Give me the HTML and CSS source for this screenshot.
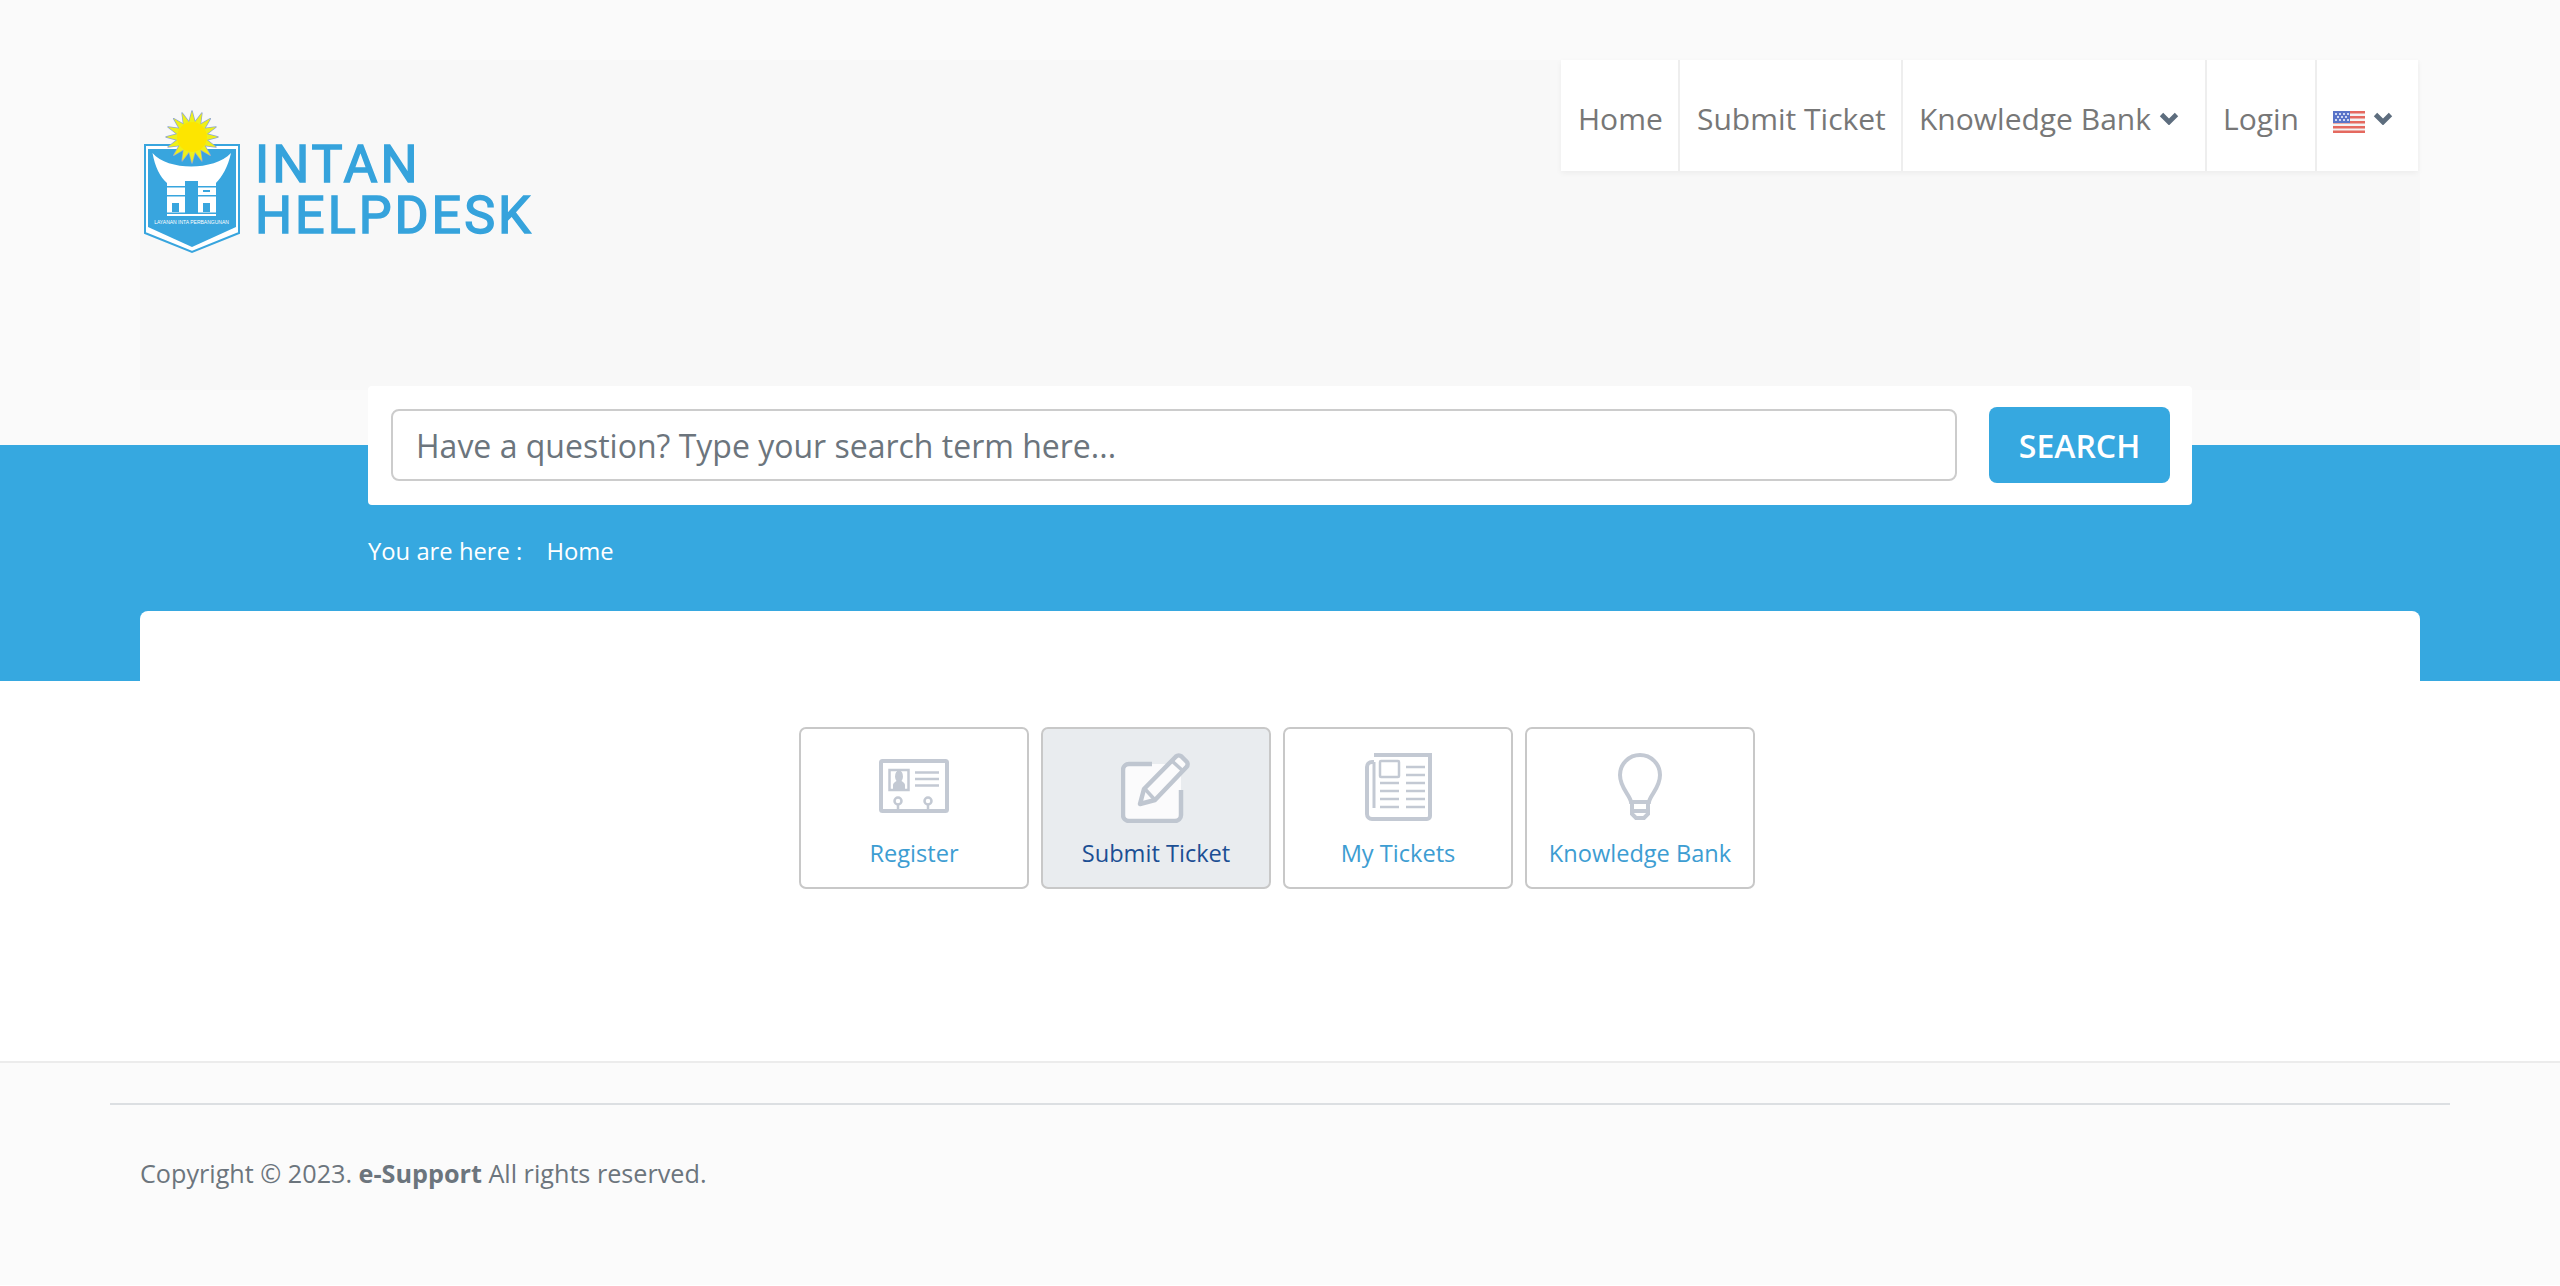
FILE: index.html
```html
<!DOCTYPE html>
<html lang="en">
<head>
<meta charset="utf-8">
<title>Intan Helpdesk</title>
<link rel="stylesheet" href="styles.css">
</head>
<body>
<header class="top">
  <div class="top-inner">
    <a class="logo" href="#">
      <svg class="logo-mark" width="96" height="150" viewBox="0 0 96 150">
        <defs>
          <polygon id="rays" points="0,-26 5.500,-5.500 26,0 5.500,5.500 0,26 -5.500,5.500 -26,0 -5.500,-5.500"/>
        </defs>
        <path d="M1 40H95V128L48 147L1 128Z" fill="#fff" stroke="#38a5de" stroke-width="2"/>
        <path d="M4 44H92V122L48 142L4 122Z" fill="#38a5de"/>
        <path d="M8.500 48C24 66 70 66 87 48C84 62 78 72 72 78V111H23V78C16 72 11 62 8.500 48Z" fill="#fff"/>
        <g fill="#38a5de">
          <rect x="41" y="76" width="13" height="32"/>
          <rect x="23" y="81" width="18" height="1.500"/><rect x="23" y="90" width="18" height="1.500"/>
          <rect x="54" y="81" width="18" height="1.500"/><rect x="54" y="90" width="18" height="1.500"/>
          <rect x="59" y="85" width="7" height="2"/>
          <rect x="28" y="98" width="7" height="9"/><rect x="59" y="98" width="7" height="9"/>
          <rect x="23" y="107.500" width="49" height="1.500"/>
        </g>
        <text class="logo-motto" x="47.500" y="119" text-anchor="middle">LAYANAN INTA PERBANGUNAN</text>
        <g transform="translate(48,32)">
          <g fill="#8fa6d6" stroke="#8fa6d6" stroke-width="1.400" stroke-linejoin="round">
            <use href="#rays"/><use href="#rays" transform="rotate(22.5)"/><use href="#rays" transform="rotate(45)"/><use href="#rays" transform="rotate(67.5)"/>
          </g>
          <g fill="#eef01a">
            <use href="#rays"/><use href="#rays" transform="rotate(22.5)"/><use href="#rays" transform="rotate(45)"/><use href="#rays" transform="rotate(67.5)"/>
          </g>
          <circle r="15" fill="#fde500"/>
        </g>
      </svg>
      <span class="logo-text"><span>INTAN</span><span>HELPDESK</span></span>
    </a>
    <nav class="nav">
      <a class="nav-item nav-home" href="#">Home</a>
      <a class="nav-item nav-submit" href="#">Submit Ticket</a>
      <a class="nav-item nav-kb" href="#">Knowledge Bank
        <svg class="chev" width="20" height="13" viewBox="0 0 20 13"><path d="M2.500 2.500L10 10L17.500 2.500" fill="none" stroke="#5d6d7e" stroke-width="4.800"/></svg>
      </a>
      <a class="nav-item nav-login" href="#">Login</a>
      <a class="nav-item nav-lang" href="#">
        <svg class="flag" width="32" height="22" viewBox="0 0 32 22">
          <rect width="32" height="22" fill="#f3f3f3"/>
          <g fill="#e5695f"><rect width="32" height="2.500"/><rect y="5" width="32" height="2.500"/><rect y="10" width="32" height="2.500"/><rect y="15" width="32" height="2.500"/><rect y="19.500" width="32" height="2.500"/></g>
          <rect width="17" height="12" fill="#5a74c8"/>
          <g fill="#cfd8f2"><rect x="2" y="2" width="2" height="2"/><rect x="6" y="2" width="2" height="2"/><rect x="10" y="2" width="2" height="2"/><rect x="14" y="2" width="2" height="2"/><rect x="4" y="5" width="2" height="2"/><rect x="8" y="5" width="2" height="2"/><rect x="12" y="5" width="2" height="2"/><rect x="2" y="8" width="2" height="2"/><rect x="6" y="8" width="2" height="2"/><rect x="10" y="8" width="2" height="2"/><rect x="14" y="8" width="2" height="2"/></g>
        </svg>
        <svg class="chev" width="20" height="13" viewBox="0 0 20 13"><path d="M2.500 2.500L10 10L17.500 2.500" fill="none" stroke="#5d6d7e" stroke-width="4.800"/></svg>
      </a>
    </nav>
  </div>
</header>

<section class="hero">
  <form class="search">
    <input class="search-input" type="text" placeholder="Have a question? Type your search term here...">
    <button class="search-btn" type="button">SEARCH</button>
  </form>
  <div class="crumbs"><span>You are here :</span><a href="#">Home</a></div>
  <div class="card-top"></div>
</section>

<main class="main">
  <div class="tiles">
    <a class="tile" href="#">
      <svg class="tile-icon" width="70" height="70" viewBox="0 0 70 70" fill="none" stroke="#c3c9d3">
        <rect x="2" y="8" width="66" height="50" rx="1.500" stroke-width="4"/>
        <rect x="10.500" y="17" width="19" height="20" stroke-width="2.500"/>
        <path d="M14 36v-4c0-2 2-3 3.500-4a4 6 0 1 1 5 0c1.500 1 3.500 2 3.500 4v4z" fill="#c3c9d3" stroke="none"/>
        <path d="M36 19.500h24M36 26h24M36 32.500h24" stroke-width="2.500"/>
        <circle cx="19" cy="48" r="3.500" stroke-width="2.500"/><circle cx="49" cy="48" r="3.500" stroke-width="2.500"/>
        <path d="M19 51.500v6M49 51.500v6" stroke-width="2.500"/>
      </svg>
      <span>Register</span>
    </a>
    <a class="tile is-active" href="#">
      <svg class="tile-icon" width="70" height="70" viewBox="0 0 70 70" fill="none" stroke="#bfc6d0">
        <rect x="2" y="11" width="58" height="57" rx="6" fill="#fbfbfc" stroke="none"/>
        <path d="M31 11H8a6 6 0 0 0-6 6v45a6 6 0 0 0 6 6h46a6 6 0 0 0 6-6V37" stroke-width="4.500"/>
        <path d="M19 51l4-15L55 3.500a4 4 0 0 1 5.500 0l5 5a4 4 0 0 1 0 5.500L34 47z" fill="#fbfbfc" stroke-width="4.500" stroke-linejoin="round"/>
        <path d="M24 36l10 11M51 8l11 10" stroke-width="3.500"/>
      </svg>
      <span>Submit Ticket</span>
    </a>
    <a class="tile" href="#">
      <svg class="tile-icon" width="70" height="70" viewBox="0 0 70 70" fill="none" stroke="#c3c9d3">
        <path d="M11 2h56v61a3 3 0 0 1-3 3H9a5 5 0 0 1-5-5V14a5 5 0 0 1 5-5h2" stroke-width="4"/>
        <path d="M11 9v46" stroke-width="3"/>
        <rect x="17" y="8" width="19" height="16" rx="1" stroke-width="2.500"/>
        <path d="M43 14h19M43 22h19M17 30h19M43 30h19M17 38h19M43 38h19M17 46h19M43 46h19M17 54h19M43 54h19" stroke-width="2.500"/>
      </svg>
      <span>My Tickets</span>
    </a>
    <a class="tile" href="#">
      <svg class="tile-icon" width="44" height="70" viewBox="0 0 44 70" fill="none" stroke="#c3c9d3">
        <path d="M13 49c-1-7-11-14-11-27a20 20 0 0 1 40 0c0 13-10 20-11 27z" stroke-width="4"/>
        <path d="M14 50v11l4 4h8l4-4V50M14 58h16" stroke-width="4"/>
      </svg>
      <span>Knowledge Bank</span>
    </a>
  </div>
</main>

<footer class="footer">
  <hr class="footer-rule">
  <p class="copyright">Copyright © 2023. <strong>e-Support</strong> All rights reserved.</p>
</footer>
</body>
</html>
```

FILE: styles.css
```css
* { box-sizing: border-box; }
html, body { margin: 0; padding: 0; }
body {
  font-family: "Open Sans", "Noto Sans", sans-serif;
  background: #fff;
  color: #6c757d;
  height: 1286px;
  overflow: hidden;
}
a { text-decoration: none; color: inherit; }

.top {
  height: 445px;
  background: #fafafa;
  padding: 60px 140px 0;
}
.top-inner {
  height: 330px;
  background: #f8f8f8;
  display: flex;
  justify-content: space-between;
  align-items: flex-start;
}
.logo {
  display: flex;
  align-items: flex-start;
  padding: 45px 0 0 4px;
}
.logo-mark { display: block; flex: none; }
.logo-motto { font: 5px "Liberation Sans", sans-serif; fill: #fff; }
.logo-text {
  display: flex;
  flex-direction: column;
  margin: 34px 0 0 15px;
  font-family: Roboto, sans-serif;
  font-size: 52px;
  line-height: 51px;
  letter-spacing: 3px;
  font-weight: 400;
  color: #36a3dc;
  -webkit-text-stroke: 1.5px #36a3dc;
}

.nav {
  display: flex;
  height: 111px;
  margin-right: 2px;
  background: #fff;
  box-shadow: 0 2px 6px rgba(0, 0, 0, .05);
}
.nav-item {
  display: flex;
  align-items: flex-start;
  gap: 8px;
  padding: 32px 16px 0;
  font-size: 30px;
  line-height: 54px;
  color: #777;
  border-left: 2px solid #eeeeee;
  white-space: nowrap;
}
.nav-home { border-left: 0; width: 117px; padding-left: 17px; }
.nav-submit { width: 223px; padding-left: 17px; }
.nav-kb { width: 304px; }
.nav-login { width: 110px; }
.nav-lang { width: 103px; }
.chev { flex: none; margin-top: 20px; }
.flag { flex: none; margin-top: 19px; }

.hero {
  display: flow-root;
  height: 236px;
  background: #36a8e0;
  padding: 0 140px;
}
.search {
  width: 1824px;
  height: 119px;
  margin: -59px auto 0;
  padding: 21px 22px 0 23px;
  background: #fff;
  border-radius: 4px;
  display: flex;
  align-items: flex-start;
  position: relative;
}
.search-input {
  width: 1566px;
  height: 72px;
  margin-top: 2px;
  padding: 0 23px;
  border: 2px solid #cccccc;
  border-radius: 8px;
  font: 32px "Open Sans", sans-serif;
  color: #6c757d;
  background: #fff;
  outline: 0;
}
.search-input::placeholder { color: #6c757d; opacity: 1; }
.search-btn {
  width: 181px;
  height: 76px;
  margin-left: 32px;
  border: 0;
  border-radius: 8px;
  background: #36a8e0;
  color: #fff;
  font: 600 32px "Open Sans", sans-serif;
}
.crumbs {
  display: flex;
  gap: 24px;
  width: 1824px;
  margin: 29px auto 0;
  font-size: 23.8px;
  line-height: 34px;
  color: #fff;
}
.card-top {
  height: 70px;
  margin-top: 43px;
  background: #fff;
  border-radius: 8px 8px 0 0;
}

.main {
  height: 380px;
  padding: 46px 6px 0 0;
}
.tiles {
  display: flex;
  justify-content: center;
  gap: 12px;
}
.tile {
  width: 230px;
  height: 162px;
  display: flex;
  flex-direction: column;
  align-items: center;
  padding-top: 24px;
  border: 2px solid #c8c8c8;
  border-radius: 7px;
  background: #fff;
  font-size: 23.6px;
  line-height: 34px;
  color: #3d9dd2;
}
.tile-icon { display: block; flex: none; }
.tile span { margin-top: 13px; }
.tile.is-active { background: #e9ecef; color: #1c4f94; }

.footer {
  height: 224px;
  background: #fbfbfb;
  border-top: 2px solid #ececec;
  padding: 40px 110px 0;
}
.footer-rule {
  margin: 0;
  border: 0;
  border-top: 2px solid #dcdfe2;
}
.copyright {
  margin: 51px 0 0 30px;
  font-size: 25.2px;
  line-height: 34px;
  color: #6c757d;
}
```
